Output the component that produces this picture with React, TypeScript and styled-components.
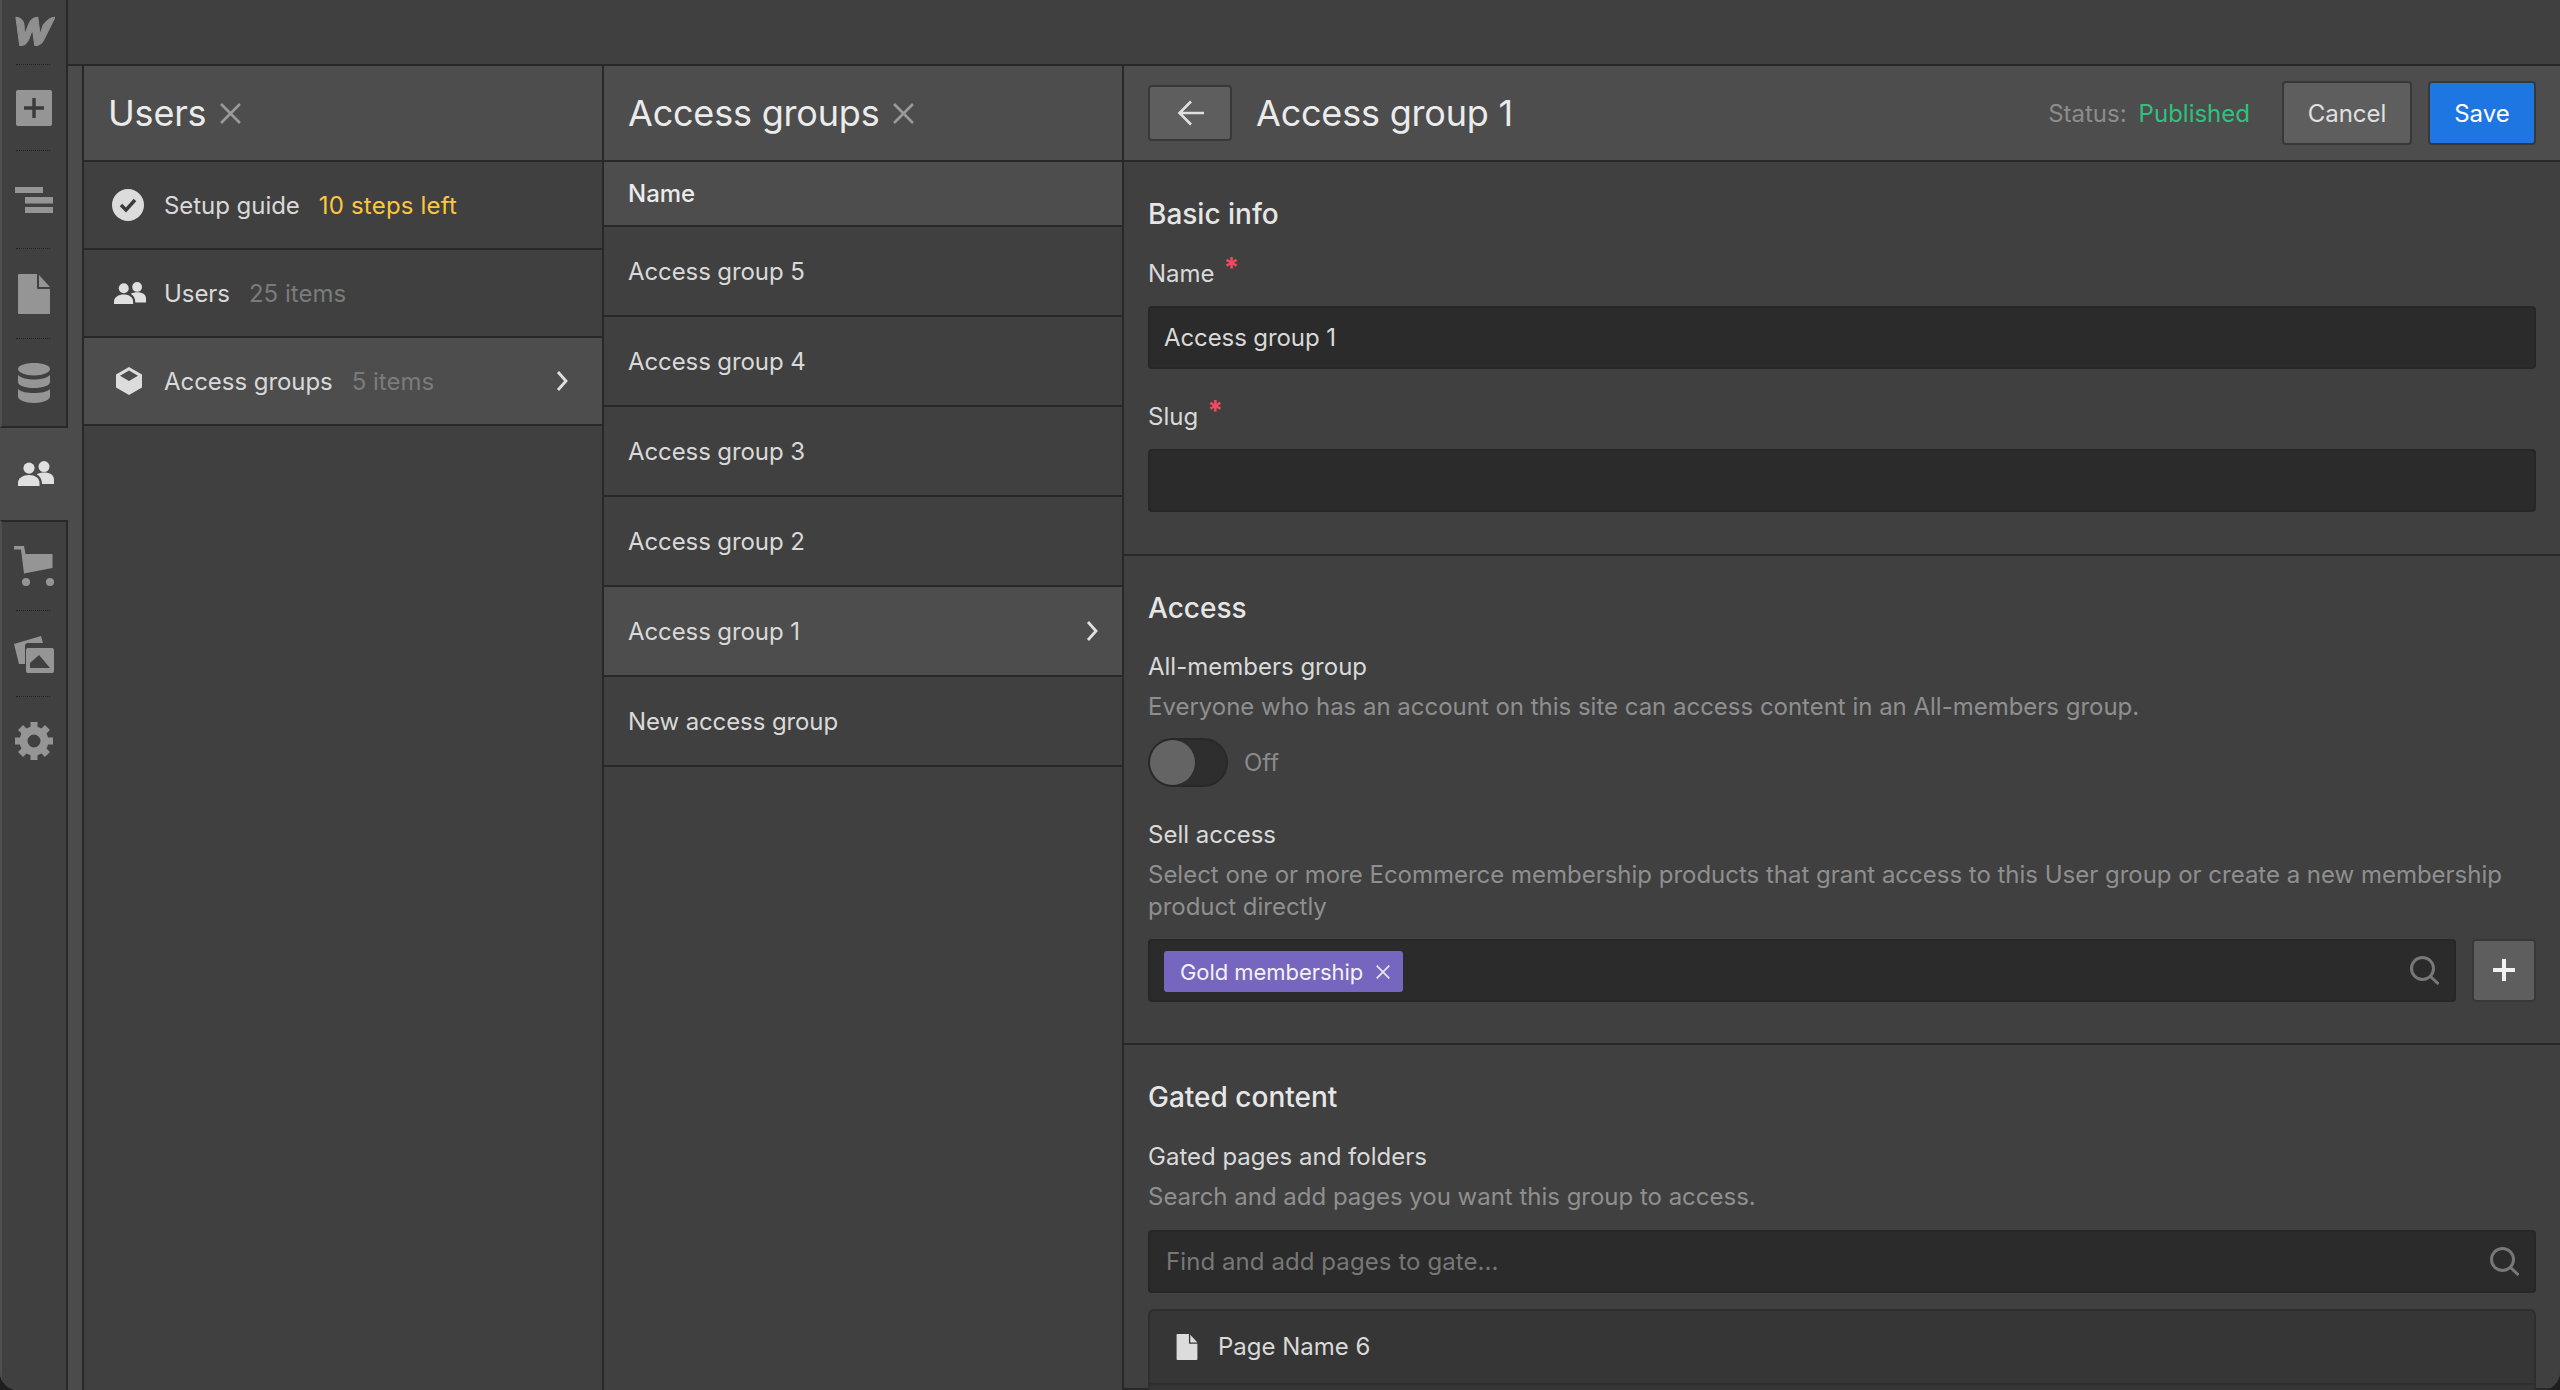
import React from "react";
import styled, { createGlobalStyle } from "styled-components";

const Global = createGlobalStyle`
  html, body { margin: 0; padding: 0; background: #1e1e1e; }
  body { font-family: Inter, "Noto Sans", sans-serif; -webkit-font-smoothing: antialiased; }
  * { box-sizing: border-box; }
`;

const LINE = "#282828";

const Win = styled.div`
  width: 2560px; height: 1390px; overflow: hidden; display: flex; background: #404040;
  border-radius: 0 0 18px 18px;
`;
const Rail = styled.nav`
  width: 68px; flex: none; display: flex; flex-direction: column; background: #4b4b4b;
`;
const RailGroup = styled.div`
  background: #404040; border-right: 2px solid ${LINE}; border-left: 2px solid #4e4e4e;
  display: flex; flex-direction: column; align-items: stretch;
`;
const RailTop = styled(RailGroup)`border-bottom: 2px solid ${LINE}; height: 428px;`;
const RailBottom = styled(RailGroup)`border-top: 2px solid ${LINE}; flex: 1;`;
const RailItem = styled.div<{ $h: number; $sep?: boolean; $lift?: number }>`
  height: ${p => p.$h}px; flex: none; display: flex; align-items: center; justify-content: center;
  position: relative; padding-bottom: ${p => p.$lift ?? 0}px;
  ${p => p.$sep ? `&::after { content: ""; position: absolute; left: 14px; width: 34px; bottom: 0; border-bottom: 1px dotted #222; }` : ""}
`;
const RailActive = styled.div`
  height: 92px; flex: none; display: flex; align-items: center; justify-content: center; padding-left: 3px;
`;
const Main = styled.div`flex: 1; min-width: 0; display: flex; flex-direction: column;`;
const TopBar = styled.header`height: 66px; flex: none; background: #404040; border-bottom: 2px solid ${LINE};`;
const Columns = styled.div`flex: 1; min-height: 0; display: flex;`;
const Strip = styled.div`width: 16px; flex: none; background: #4b4b4b; border-right: 2px solid ${LINE};`;
const Panel = styled.section`
  width: 520px; flex: none; background: #404040; border-right: 2px solid ${LINE};
  display: flex; flex-direction: column;
`;
const PanelHead = styled.div`
  height: 96px; flex: none; background: #4d4d4d; border-bottom: 2px solid ${LINE};
  display: flex; align-items: center; padding: 0 24px; gap: 14px;
`;
const Title = styled.h1`
  margin: 0; font-size: 36px; font-weight: 400; color: #ebebeb; line-height: 44px; letter-spacing: -0.2px;
`;
const MenuRow = styled.div<{ $active?: boolean }>`
  height: 88px; flex: none; display: flex; align-items: center; padding: 0 24px;
  background: ${p => p.$active ? "#4d4d4d" : "#404040"}; border-bottom: 2px solid ${LINE};
  font-size: 24px; color: #d9d9d9; letter-spacing: -0.05px;
`;
const MenuIcon = styled.span<{ $pad: number }>`
  width: 56px; flex: none; display: flex; align-items: center; padding-left: ${p => p.$pad}px;
`;
const MenuCount = styled.span<{ $warn?: boolean }>`
  margin-left: 19px; color: ${p => p.$warn ? "#fdc63c" : "#7b7b7b"};
  letter-spacing: ${p => p.$warn ? "0.2px" : "0"};
`;
const Chevron = styled.span`margin-left: auto; display: flex; padding-right: 10px;`;
const ColHead = styled.div`
  height: 65px; flex: none; background: #4d4d4d; border-bottom: 2px solid ${LINE};
  display: flex; align-items: center; padding: 0 24px; font-size: 24px; font-weight: 500; color: #ebebeb;
`;
const GroupRow = styled.div<{ $active?: boolean }>`
  height: 90px; flex: none; display: flex; align-items: center; justify-content: space-between; padding: 0 24px;
  background: ${p => p.$active ? "#4d4d4d" : "#404040"}; border-bottom: 2px solid ${LINE};
  font-size: 24px; color: #d9d9d9; letter-spacing: -0.1px;
`;
const Detail = styled.section`flex: 1; min-width: 0; display: flex; flex-direction: column; background: #404040;`;
const DetailHead = styled(PanelHead)`gap: 0;`;
const IconButton = styled.button`
  width: 84px; height: 56px; flex: none; padding: 0; display: flex; align-items: center; justify-content: center;
  background: #5e5e5e; border: 2px solid #383838; border-radius: 4px; color: #e6e6e6;
`;
const BackButton = styled(IconButton)`padding-left: 2px;`;
const DetailTitle = styled(Title)`margin-left: 24px;`;
const Status = styled.div`
  margin-left: auto; display: flex; gap: 12px; font-size: 24px; color: #8c8c8c; margin-right: 32px;
`;
const Published = styled.span`color: #2ec27e;`;
const Btn = styled.button<{ $primary?: boolean }>`
  height: 64px; padding: 0; flex: none; font: inherit; font-size: 24px;
  width: ${p => p.$primary ? 108 : 130}px; margin-left: ${p => p.$primary ? 16 : 0}px;
  background: ${p => p.$primary ? "#1e76e3" : "#5e5e5e"}; color: ${p => p.$primary ? "#fff" : "#e0e0e0"};
  border: 2px solid #383838; border-radius: 4px;
`;
const Section = styled.div<{ $h: number }>`
  height: ${p => p.$h}px; flex: none; padding: 32px 24px 0; border-bottom: 2px solid ${LINE};
`;
const Heading = styled.h2`
  margin: 0; font-size: 28px; font-weight: 500; line-height: 40px; color: #e6e6e6;
`;
const Label = styled.div<{ $mt: number }>`
  margin-top: ${p => p.$mt}px; font-size: 24px; line-height: 32px; color: #d9d9d9; display: flex;
`;
const Star = styled.span`
  color: #f2495f; font-size: 28px; line-height: 20px; margin-left: 9px; font-weight: 700;
`;
const Desc = styled.p`
  margin: 8px 0 0; font-size: 24px; line-height: 32.5px; color: #8f8f8f; letter-spacing: -0.015px;
`;
const Field = styled.div<{ $mt?: number }>`
  margin-top: ${p => p.$mt ?? 16}px; height: 63px; background: #2b2b2b; border: 2px solid #272727; border-radius: 4px;
  display: flex; align-items: center; padding: 0 15px 0 14px; font-size: 24px; color: #d9d9d9; flex: 1; min-width: 0;
  letter-spacing: -0.1px;
`;
const Placeholder = styled.span`color: #777; margin-left: 2px; letter-spacing: 0.08px;`;
const SearchMark = styled.span`margin-left: auto; display: flex;`;
const ToggleRow = styled.div`margin-top: 14px; display: flex; align-items: center; gap: 16px; font-size: 24px; color: #8a8a8a;`;
const Toggle = styled.div`
  width: 80px; height: 49px; border-radius: 25px; background: #2e2e2e; border: 2px solid #282828; display: flex;
`;
const Knob = styled.div`width: 45px; height: 45px; border-radius: 50%; background: #646464;`;
const SelectRow = styled.div`margin-top: 15px; display: flex; gap: 16px;`;
const Tag = styled.div`
  height: 41px; margin-top: 3px; display: flex; align-items: center; gap: 13px; padding: 0 13px 0 16px; background: #7766bf;
  border-radius: 3px; color: #f2f2f2; font-size: 22px; letter-spacing: -0.05px;
`;
const PlusButton = styled(IconButton)`width: 64px; height: 63px;`;
const List = styled.div`
  margin-top: 16px; background: #363636; border: 2px solid #2e2e2e; border-radius: 6px; height: 90px;
`;
const ListRow = styled.div`
  height: 74px; border-bottom: 2px solid #2e2e2e; display: flex; align-items: center; padding-left: 26px; gap: 20px;
  font-size: 24px; color: #d9d9d9;
`;

const Close = ({ size = 21, color = "#9a9a9a" }: { size?: number; color?: string }) => (
  <svg width={size} height={size} viewBox="0 0 20 20" fill="none" stroke={color} strokeWidth="2.5">
    <path d="M1 1l18 18M19 1L1 19" />
  </svg>
);
const ChevronIcon = () => (
  <svg width="12" height="20" viewBox="0 0 12 20" fill="none" stroke="#e0e0e0" strokeWidth="2.8">
    <path d="M2 1l8 9-8 9" />
  </svg>
);
const Search = () => (
  <svg width="29" height="29" viewBox="0 0 29 29" fill="none" stroke="#787878" strokeWidth="3">
    <circle cx="12.5" cy="12.5" r="11" />
    <path d="M20 20l8.5 8" />
  </svg>
);
const People = ({ w = 36, color = "#e0e0e0" }: { w?: number; color?: string }) => (
  <svg width={w} height={w * 0.7} viewBox="0 0 36 25" fill={color}>
    <circle cx="11" cy="7" r="5.6" />
    <path d="M0 25v-3c0-5 5-8 11-8s10.500 3 10.500 8v3z" />
    <circle cx="26" cy="5.500" r="5.500" />
    <path d="M19 13c2-.8 4.500-1.500 7-1.500 6 0 10 2.500 10 7V23H24c0-4.500-2-8-5-9.500z" />
  </svg>
);

const Logo = () => (
  <svg width="42" height="30" viewBox="0 0 40 28" fill="#8f8f8f" stroke="#8f8f8f" strokeWidth="1">
    <path d="M28.800 8.200s-2.800 8.600-3 9.300C25.700 16.800 23.600 1 23.600 1c-4.800 0-7.400 3.400-8.800 7.100 0 0-3.500 8.700-3.700 9.400-.1-.7-.6-9.300-.6-9.300C10.200 3.900 6.300 1 2.800 1l3.600 27c4.900-.1 7.600-3.400 9-7.100 0 0 3-7.700 3.200-8.200 0 .5 2.200 15.300 2.200 15.300 4.900 0 7.500-3.100 9-6.500L40 1c-4.900 0-7.500 3.300-11.200 7.200z" />
  </svg>
);
const AddIcon = () => (
  <svg width="36" height="36" viewBox="0 0 36 36">
    <rect width="36" height="36" rx="2" fill="#959595" />
    <path d="M18 8v20M8 18h20" stroke="#3a3a3a" strokeWidth="3.400" />
  </svg>
);
const NavigatorIcon = () => (
  <svg width="38" height="26" viewBox="0 0 38 26" fill="#959595">
    <rect x="0" y="0" width="28" height="6" />
    <rect x="10" y="10" width="28" height="6.500" />
    <rect x="10" y="20" width="28" height="6" />
  </svg>
);
const PageIcon = ({ w = 32, h = 40, color = "#959595" }: { w?: number; h?: number; color?: string }) => (
  <svg width={w} height={h} viewBox="0 0 32 40" fill={color}>
    <path d="M1 0h18v14a1 1 0 0 0 1 1h12v24a1 1 0 0 1-1 1H1a1 1 0 0 1-1-1V1a1 1 0 0 1 1-1z" />
    <path d="M21 1l11 12H21z" />
  </svg>
);
const DbIcon = () => (
  <svg width="32" height="40" viewBox="0 0 32 40" fill="#959595">
    <path d="M0 6c0-3.500 7-6 16-6s16 2.500 16 6-7 6.500-16 6.500S0 9.500 0 6z" />
    <path d="M0 12c3 3 9 4.500 16 4.500S29 15 32 12v7c0 3.500-7 6-16 6S0 22.500 0 19z" />
    <path d="M0 26c3 3 9 4 16 4s13-1 16-4v7.500c0 3.500-7 6.500-16 6.500S0 37 0 33.500z" />
  </svg>
);
const CartIcon = () => (
  <svg width="40" height="42" viewBox="0 0 40 42" fill="#959595">
    <path d="M0 0h10l1.500 8H38.500v14L10 27.500 7 3.500H0z" />
    <circle cx="12" cy="36" r="4" />
    <circle cx="36" cy="36" r="4" />
  </svg>
);
const AssetsIcon = () => (
  <svg width="40" height="37" viewBox="0 0 40 37" fill="#959595">
    <path d="M0 8L27 0l2 7H14a3 3 0 0 0-3 3v18H5z" />
    <path fillRule="evenodd" d="M14 12h24a2 2 0 0 1 2 2v21a2 2 0 0 1-2 2H14a2 2 0 0 1-2-2V14a2 2 0 0 1 2-2zM16 32h20L25 19l-9 8z" />
    <circle cx="33" cy="18" r="3" fill="#959595" />
  </svg>
);
const GearIcon = () => (
  <svg width="38" height="38" viewBox="0 0 38 38" fill="#959595">
    <circle cx="19" cy="19" r="10.500" fill="none" stroke="#959595" strokeWidth="8" />
    {[0, 45, 90, 135, 180, 225, 270, 315].map(a => (
      <rect key={a} x="15.500" y="0" width="7" height="8" transform={`rotate(${a} 19 19)`} />
    ))}
  </svg>
);
const CheckBadge = () => (
  <svg width="32" height="32" viewBox="0 0 32 32">
    <circle cx="16" cy="16" r="16" fill="#dcdcdc" />
    <path d="M9 16l5 5 9-10" fill="none" stroke="#3a3a3a" strokeWidth="3.400" />
  </svg>
);
const Cube = () => (
  <svg width="28" height="28" viewBox="0 0 28 28" fill="#dcdcdc">
    <path fillRule="evenodd" d="M14 0l13 7.500v13L14 28 1 20.500v-13zM14 3.500L5 8.800l9 5.200 9-5.200z" />
  </svg>
);
const ArrowLeft = () => (
  <svg width="28" height="26" viewBox="0 0 28 26" fill="none" stroke="#e0e0e0" strokeWidth="2.600">
    <path d="M27 13H3M14 1.500L2.500 13 14 24.500" />
  </svg>
);
const Plus = () => (
  <svg width="22" height="22" viewBox="0 0 22 22" fill="none" stroke="#f0f0f0" strokeWidth="4">
    <path d="M11 0v22M0 11h22" />
  </svg>
);

const groups = ["Access group 5", "Access group 4", "Access group 3", "Access group 2", "Access group 1", "New access group"];

export default function App() {
  return (
    <Win>
      <Global />
      <Rail>
        <RailTop>
          <RailItem $h={65} $sep $lift={3}><Logo /></RailItem>
          <RailItem $h={86} $sep><AddIcon /></RailItem>
          <RailItem $h={98} $sep><NavigatorIcon /></RailItem>
          <RailItem $h={90} $sep><PageIcon /></RailItem>
          <RailItem $h={87}><DbIcon /></RailItem>
        </RailTop>
        <RailActive><People w={36} /></RailActive>
        <RailBottom>
          <RailItem $h={89} $sep><CartIcon /></RailItem>
          <RailItem $h={86} $sep><AssetsIcon /></RailItem>
          <RailItem $h={88}><GearIcon /></RailItem>
        </RailBottom>
      </Rail>
      <Main>
        <TopBar />
        <Columns>
          <Strip />
          <Panel>
            <PanelHead><Title>Users</Title><Close /></PanelHead>
            <MenuRow>
              <MenuIcon $pad={4}><CheckBadge /></MenuIcon>Setup guide<MenuCount $warn>10 steps left</MenuCount>
            </MenuRow>
            <MenuRow>
              <MenuIcon $pad={6}><People w={32} /></MenuIcon>Users<MenuCount>25 items</MenuCount>
            </MenuRow>
            <MenuRow $active>
              <MenuIcon $pad={7}><Cube /></MenuIcon>Access groups<MenuCount>5 items</MenuCount>
              <Chevron><ChevronIcon /></Chevron>
            </MenuRow>
          </Panel>
          <Panel>
            <PanelHead><Title>Access groups</Title><Close /></PanelHead>
            <ColHead>Name</ColHead>
            {groups.map(g => (
              <GroupRow key={g} $active={g === "Access group 1"}>
                {g}
                {g === "Access group 1" && <ChevronIcon />}
              </GroupRow>
            ))}
          </Panel>
          <Detail>
            <DetailHead>
              <BackButton><ArrowLeft /></BackButton>
              <DetailTitle>Access group 1</DetailTitle>
              <Status>Status: <Published>Published</Published></Status>
              <Btn>Cancel</Btn>
              <Btn $primary>Save</Btn>
            </DetailHead>
            <Section $h={394}>
              <Heading>Basic info</Heading>
              <Label $mt={24}>Name<Star>*</Star></Label>
              <Field>Access group 1</Field>
              <Label $mt={32}>Slug<Star>*</Star></Label>
              <Field />
            </Section>
            <Section $h={489}>
              <Heading>Access</Heading>
              <Label $mt={23}>All-members group</Label>
              <Desc>Everyone who has an account on this site can access content in an All-members group.</Desc>
              <ToggleRow><Toggle><Knob /></Toggle>Off</ToggleRow>
              <Label $mt={32}>Sell access</Label>
              <Desc>Select one or more Ecommerce membership products that grant access to this User group or create a new membership product directly</Desc>
              <SelectRow>
                <Field $mt={0}>
                  <Tag>Gold membership<Close size={14} color="#e6e6e6" /></Tag>
                  <SearchMark><Search /></SearchMark>
                </Field>
                <PlusButton><Plus /></PlusButton>
              </SelectRow>
            </Section>
            <Section $h={345}>
              <Heading>Gated content</Heading>
              <Label $mt={24}>Gated pages and folders</Label>
              <Desc>Search and add pages you want this group to access.</Desc>
              <Field $mt={16}>
                <Placeholder>Find and add pages to gate...</Placeholder>
                <SearchMark><Search /></SearchMark>
              </Field>
              <List>
                <ListRow><PageIcon w={22} h={26} color="#dcdcdc" />Page Name 6</ListRow>
              </List>
            </Section>
          </Detail>
        </Columns>
      </Main>
    </Win>
  );
}
